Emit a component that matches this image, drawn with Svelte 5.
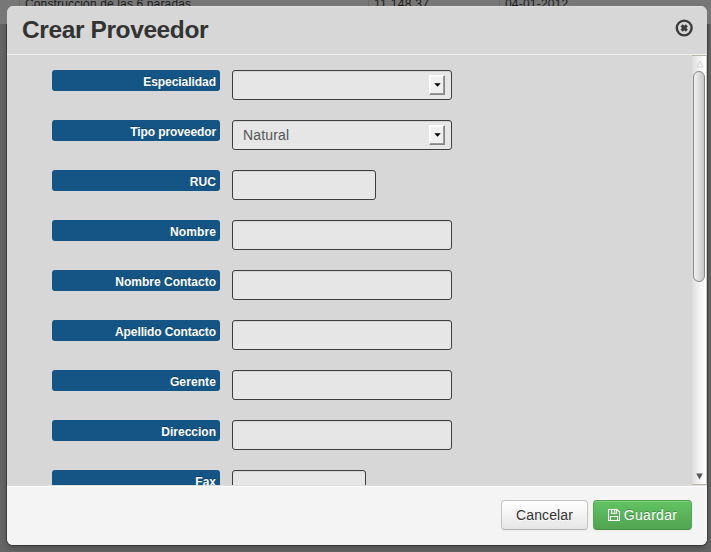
<script>
  const fields = [
    { label: 'Especialidad', type: 'select', value: '', width: 220, spacing: -0.05 },
    { label: 'Tipo proveedor', type: 'select', value: 'Natural', width: 220, spacing: -0.1 },
    { label: 'RUC', type: 'text', width: 144, spacing: 0.1 },
    { label: 'Nombre', type: 'text', width: 220, spacing: 0.1 },
    { label: 'Nombre Contacto', type: 'text', width: 220, spacing: 0 },
    { label: 'Apellido Contacto', type: 'text', width: 220, spacing: -0.1 },
    { label: 'Gerente', type: 'text', width: 220, spacing: 0.1 },
    { label: 'Direccion', type: 'text', width: 220, spacing: 0 },
    { label: 'Fax', type: 'text', width: 134, spacing: 0 }
  ];
</script>

<div class="page">
  <div class="row">
    <span class="cell first">Construcción de las 6 paradas</span>
    <span class="cell amount">11,148.37</span>
    <span class="cell date">04-01-2012</span>
  </div>

  <div class="modal">
    <header>
      <h3>Crear Proveedor</h3>
      <button class="close" aria-label="Cerrar">
        <svg width="18" height="18" viewBox="0 0 18 18">
          <circle cx="9.2" cy="9" r="7.4" fill="none" stroke="#3b3b3b" stroke-width="2.4" />
          <path d="M6.6 6.4 11.8 11.6M11.8 6.4 6.6 11.6" stroke="#3b3b3b" stroke-width="3" />
        </svg>
      </button>
    </header>

    <div class="body">
      <form>
        {#each fields as f}
          <div class="group">
            <span class="label" style="letter-spacing: {f.spacing}px">{f.label}</span>
            <div class="control" style="width: {f.width}px">
              {#if f.type === 'select'}
                <span class="value">{f.value}</span>
                <span class="drop">
                  <svg width="7" height="4" viewBox="0 0 7 4"><path d="M0.3 0.3H6.7L3.5 3.7Z" fill="#000" /></svg>
                </span>
              {/if}
            </div>
          </div>
        {/each}
      </form>
      <div class="scroll">
        <svg class="up" width="8" height="8" viewBox="0 0 8 8"><path d="M4 1 7 7H1Z" fill="none" stroke="#d2d2d2" /></svg>
        <div class="thumb"></div>
        <svg class="down" width="7" height="7" viewBox="0 0 7 7"><path d="M0.2 0.5H6.8L3.5 6.5Z" fill="#555" /></svg>
      </div>
    </div>

    <footer>
      <button class="btn">Cancelar</button>
      <button class="btn save">
        <svg width="12" height="12" viewBox="0 0 12 12" fill="none" stroke="#fff" stroke-width="1.1">
          <path d="M.5.5H9L11.5 3V11.5H.5Z" />
          <path d="M3.5.5V4.3H8.5V.5M2.5 11.5V7.5H9.5V11.5" />
          <path d="M6.6 1V3.5" />
        </svg>
        <span>Guardar</span>
      </button>
    </footer>
  </div>
</div>

<style>
  :global(body) {
    overflow: hidden;
  }
  .page {
    position: relative;
    box-sizing: border-box;
    width: 711px;
    height: 552px;
    overflow: hidden;
    padding: 6px 4px 7px 7px;
    background: #666;
    font-family: 'Liberation Sans', Arial, sans-serif;
  }
  .row {
    position: absolute;
    top: 0;
    left: 0;
    right: 0;
    height: 24px;
    display: flex;
    background: #777;
    color: #1b1b1b;
    font-size: 12px;
  }
  .cell {
    box-sizing: border-box;
    height: 24px;
    padding-left: 5px;
    border-left: 1px solid #6a6a6a;
    line-height: 8px;
    letter-spacing: 0.14px;
  }
  .cell.first {
    margin-left: 19px;
    width: 349px;
  }
  .cell.amount {
    width: 131px;
    letter-spacing: 0.3px;
  }
  .cell.date {
    flex: 1;
    letter-spacing: 0.2px;
  }
  .modal {
    position: relative;
    display: flex;
    flex-direction: column;
    height: 539px;
    width: 700px;
    border-radius: 6px;
    overflow: hidden;
    background: #d7d7d7;
  }
  .page::before {
    content: '';
    position: absolute;
    left: 7px;
    top: 6px;
    width: 700px;
    height: 539px;
    border-radius: 6px;
    box-shadow: 0 0 0 1px rgba(0, 0, 0, 0.3), 0 3px 7px rgba(0, 0, 0, 0.3);
  }
  header {
    box-sizing: border-box;
    flex: none;
    height: 49px;
    display: flex;
    align-items: flex-start;
    justify-content: space-between;
    padding: 9px 14px 0 15px;
    border-bottom: 1px solid #eee;
    box-shadow: inset 0 1px 1px #dfdfdf;
  }
  h3 {
    margin: 0;
    color: #333;
    font-size: 24.5px;
    line-height: 30px;
    font-weight: bold;
    letter-spacing: -0.39px;
    text-rendering: optimizeLegibility;
  }
  .close {
    display: flex;
    margin: 4px 0 0;
    padding: 0;
    border: 0;
    background: none;
  }
  .body {
    flex: none;
    height: 430px;
    display: flex;
    justify-content: space-between;
    overflow: hidden;
  }
  form {
    display: flex;
    flex-direction: column;
    gap: 20px;
    padding: 15px 0 0 45px;
  }
  .group {
    flex: none;
    height: 30px;
    display: flex;
    align-items: flex-start;
    gap: 12px;
  }
  .label {
    box-sizing: border-box;
    width: 168px;
    height: 21px;
    padding: 5px 4px 0 0;
    border-radius: 3px;
    background: #145586;
    color: #fff;
    font-size: 12px;
    line-height: 14px;
    font-weight: bold;
    text-align: right;
    text-shadow: 0 -1px 0 rgba(0, 0, 0, 0.25);
  }
  .control {
    box-sizing: border-box;
    height: 30px;
    display: flex;
    align-items: center;
    justify-content: space-between;
    padding: 0 6px 0 10px;
    border: 1px solid #3e3e3e;
    border-radius: 3px;
    background: #e6e6e6;
    box-shadow: inset 0 1px 1px rgba(0, 0, 0, 0.075);
  }
  .value {
    color: #555;
    font-size: 14px;
    line-height: 20px;
    letter-spacing: 0.15px;
  }
  .drop {
    box-sizing: border-box;
    width: 16px;
    height: 20px;
    display: flex;
    align-items: center;
    justify-content: center;
    border: 1px solid;
    border-color: #fff #858585 #858585 #fff;
    box-shadow: inset -1px -1px 0 #9a9a9a, inset 1px 1px 0 #fafafa;
    background: #f0f0f0;
  }
  .scroll {
    box-sizing: border-box;
    width: 15px;
    height: 430px;
    display: flex;
    flex-direction: column;
    align-items: center;
    padding: 4px 0 4px 1px;
    border-top: 1px solid #bdb8ae;
    border-right: 1px solid #d3cebf;
    border-bottom: 1px solid #b9b4a5;
    background: linear-gradient(90deg, #dedede, #f1f1f1 50%, #fff);
  }
  .thumb {
    box-sizing: border-box;
    width: 12px;
    height: 211px;
    margin: 3px 1px 0 0;
    border: 1px solid #888;
    border-radius: 6px;
    background: linear-gradient(90deg, #f2f2f2, #d8d8d8 60%, #c6c6c6);
  }
  .down {
    margin-top: auto;
  }
  footer {
    box-sizing: border-box;
    flex: 1;
    display: flex;
    align-items: flex-start;
    justify-content: flex-end;
    gap: 5px;
    padding: 14px 15px 0;
    border-top: 1px solid #ddd;
    background: #f4f4f4;
    box-shadow: inset 0 1px 0 #fff;
  }
  .btn {
    box-sizing: border-box;
    height: 30px;
    width: 87px;
    display: flex;
    align-items: center;
    justify-content: center;
    gap: 4px;
    padding: 0;
    border: 1px solid #c5c5c5;
    border-bottom-color: #b3b3b3;
    border-radius: 4px;
    background: linear-gradient(#fff, #e6e6e6);
    box-shadow: inset 0 1px 0 rgba(255, 255, 255, 0.2), 0 1px 2px rgba(0, 0, 0, 0.05);
    color: #333;
    font: 14px/20px 'Liberation Sans', Arial, sans-serif;
    letter-spacing: 0.1px;
    text-shadow: 0 1px 1px rgba(255, 255, 255, 0.75);
  }
  .btn.save {
    width: 99px;
    border-color: #51a351 #51a351 #439143;
    background: linear-gradient(#62c462, #51a351);
    color: #fff;
    letter-spacing: 0.3px;
    text-shadow: 0 -1px 0 rgba(0, 0, 0, 0.25);
  }
</style>
